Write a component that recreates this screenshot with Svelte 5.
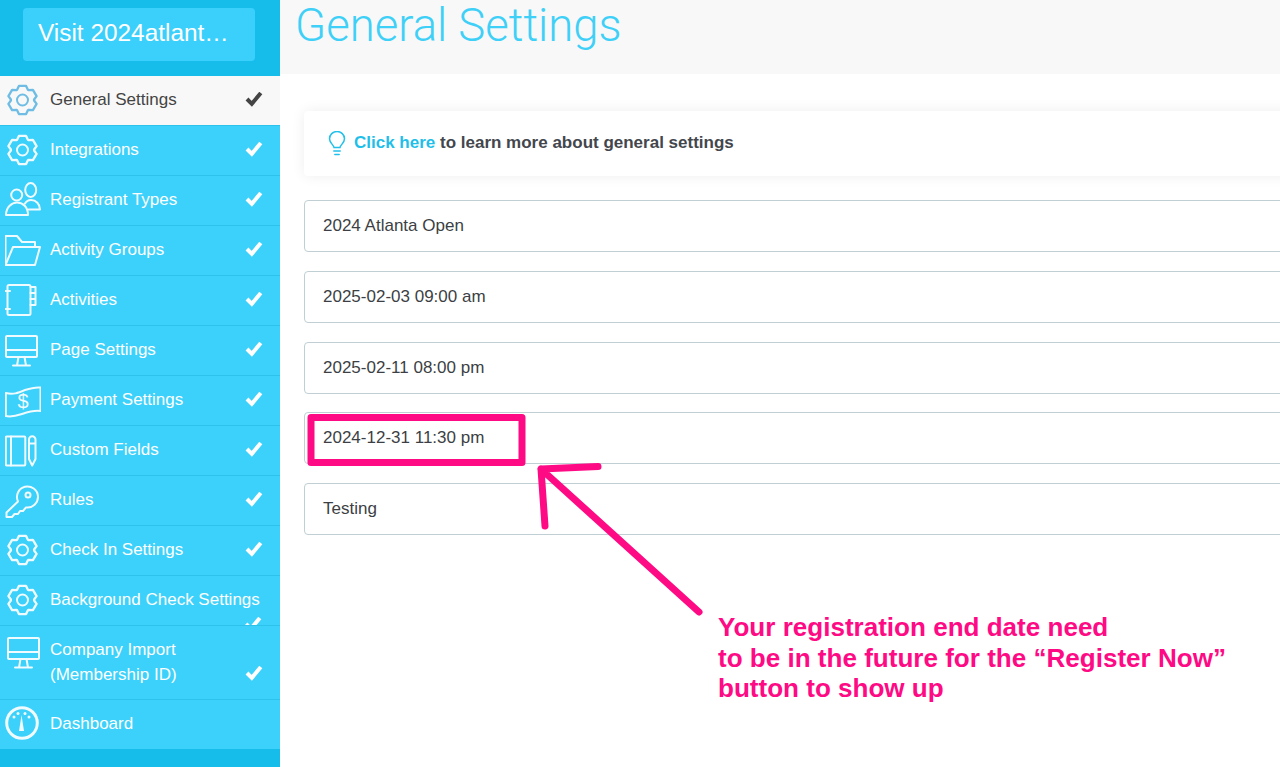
<script>
	// 6-tooth gear outline, centred on 17.5,18 in the 36px icon box
	function gearPath() {
		const pts = [];
		for (let i = 0; i < 6; i++) {
			const a = (i * Math.PI) / 3 - Math.PI / 2;
			for (const [off, r] of [
				[-0.48, 11.6],
				[-0.25, 14.6],
				[0.25, 14.6],
				[0.48, 11.6]
			]) {
				pts.push([17.5 + r * Math.cos(a + off), 18 + r * Math.sin(a + off)]);
			}
		}
		return 'M' + pts.map((p) => p[0].toFixed(1) + ' ' + p[1].toFixed(1)).join('L') + 'Z';
	}
	const gear = gearPath();

	const items = [
		{ label: 'General Settings', icon: 'gear', active: true },
		{ label: 'Integrations', icon: 'gear' },
		{ label: 'Registrant Types', icon: 'users' },
		{ label: 'Activity Groups', icon: 'folder' },
		{ label: 'Activities', icon: 'notebook' },
		{ label: 'Page Settings', icon: 'monitor' },
		{ label: 'Payment Settings', icon: 'money' },
		{ label: 'Custom Fields', icon: 'book' },
		{ label: 'Rules', icon: 'key' },
		{ label: 'Check In Settings', icon: 'gear' },
		{ label: 'Background Check Settings', icon: 'gear', pushed: true },
		{ label: 'Company Import', second: '(Membership ID)', icon: 'monitor', tall: true },
		{ label: 'Dashboard', icon: 'gauge', nocheck: true }
	];

	const fields = [
		'2024 Atlanta Open',
		'2025-02-03 09:00 am',
		'2025-02-11 08:00 pm',
		'2024-12-31 11:30 pm',
		'Testing'
	];
</script>

<div class="page">
	<aside class="sidebar">
		<div class="top">
			<div class="visit">Visit 2024atlant…</div>
		</div>
		<nav>
			{#each items as item}
				<div class="row" class:active={item.active} class:pushed={item.pushed} class:tall={item.tall} class:last={item.nocheck}>
					<svg class="icon" viewBox="0 0 36 36" width="36" height="36">
						{#if item.icon === 'gear'}
							<path class="cog" d={gear} />
							<circle cx="17.5" cy="18" r="5.5" />
						{:else if item.icon === 'users'}
							<circle cx="11.7" cy="13" r="5.5" />
							<ellipse cx="25.7" cy="8" rx="5.5" ry="7" />
							<path d="M1 33C1 25 7 20.500 12 20.500C18 20.500 23 25 23 33Z" />
							<path d="M20 21.500C21.500 19 24 18 26 18C31 18 35 22 35 27.500H23.500" />
						{:else if item.icon === 'folder'}
							<path d="M0.500 33V4H12L17 10H30V15" />
							<path d="M0.500 33L8 15H35L30 33Z" />
						{:else if item.icon === 'notebook'}
							<rect x="2.500" y="3" width="23" height="30" rx="1.500" />
							<path d="M0 9H5M0 27H5M25.500 5H30.500V23H25.500M25.500 11H30.500M25.500 17H30.500" />
						{:else if item.icon === 'monitor'}
							<rect x="1" y="4" width="31" height="21" rx="1" />
							<path d="M1 18H32M13.500 25L12 33.500M19.500 25L21 33.500M8 33.500H25" />
						{:else if item.icon === 'money'}
							<path d="M0.800 11C8 13 13 11 20 8C26 6 31 5 35.500 5.500V29C29 28 23 30 17 32C11 34 5 35 0.800 34Z" />
							<text x="18" y="26">$</text>
						{:else if item.icon === 'book'}
							<rect x="0.800" y="4.500" width="19.500" height="29" rx="1" />
							<path d="M6 4.500V33.500M24 7.500A3.250 3.250 0 0 1 30.500 7.500V27L27.200 33.500L24 27ZM24 11.500H30.500" />
						{:else if item.icon === 'key'}
							<path d="M13 19.500L1.500 30.500V35H7L9.500 32H13L15 29H18L21 25.400A10.500 10.500 0 1 0 13 19.500Z" />
							<circle cx="23" cy="13" r="2.500" />
						{:else if item.icon === 'gauge'}
							<circle class="thick" cx="17" cy="17" r="15.300" />
							<path class="solid" d="M16.500 9L19 25H14Z" />
							<circle class="solid" cx="9" cy="11" r="1.500" />
							<circle class="solid" cx="13" cy="7.500" r="1.500" />
							<circle class="solid" cx="20" cy="7.500" r="1.500" />
							<circle class="solid" cx="24" cy="11" r="1.500" />
						{/if}
					</svg>
					<span class="label">
						{item.label}
						{#if item.second}<br />{item.second}{/if}
					</span>
					{#if !item.nocheck}
						<svg class="check" viewBox="0 0 18 16" width="18" height="16">
							<path d="M2 7L6.800 11.800L15.800 1" />
						</svg>
					{/if}
				</div>
			{/each}
		</nav>
	</aside>

	<main>
		<header>
			<h1>General Settings</h1>
		</header>
		<div class="content">
			<div class="callout">
				<svg class="bulb" viewBox="0 0 18 25" width="18" height="25">
					<path d="M6 16.500C5.500 13.500 1.500 12 1.500 7.800A7.500 7.300 0 0 1 16.500 7.800C16.500 12 12.500 13.500 12 16.500Z" />
					<path d="M5.800 20H12.200M6.800 23.500H11.200" />
				</svg>
				<span><a href="#top">Click here</a> to learn more about general settings</span>
			</div>
			<div class="fields">
				{#each fields as value}
					<div class="field">{value}</div>
				{/each}
			</div>
		</div>
	</main>

	<svg class="marks" viewBox="0 0 1280 767" width="1280" height="767">
		<rect x="311" y="417.500" width="211" height="45" />
		<path d="M541 469L699 612M541 469L598 466.500M541 469L545 526" />
	</svg>
	<p class="note">
		Your registration end date need<br />
		to be in the future for the “Register Now”<br />
		button to show up
	</p>
</div>

<style>
	:global(body) {
		background: #fff;
	}

	.page {
		position: relative;
		display: flex;
		height: 767px;
		overflow: hidden;
		font-family: 'Liberation Sans', Arial, sans-serif;
	}

	.sidebar {
		flex: 0 0 280px;
		min-width: 0;
		background: #17bdea;
	}

	.top {
		height: 76px;
		padding: 8px 25px 0 23px;
		box-sizing: border-box;
	}

	.visit {
		height: 53px;
		line-height: 50px;
		padding: 0 15px;
		border-radius: 4px;
		background: #3bd0fb;
		color: #fff;
		font-size: 24.400px;
		white-space: nowrap;
	}

	.row {
		display: flex;
		align-items: center;
		box-sizing: border-box;
		height: 50px;
		padding: 0 17px 2px 5px;
		background: #3bd1fb;
		border-bottom: 1px solid #2cc2ec;
		color: #fff;
		font-size: 17px;
		line-height: 25px;
		overflow: hidden;
	}

	.row.active {
		background: #f8f8f8;
		color: #444;
	}

	.row.tall {
		height: 74px;
		align-items: flex-start;
		padding-top: 11px;
		padding-left: 7px;
	}

	.row.last {
		height: 49px;
		border-bottom: 0;
	}

	.label {
		flex: none;
		margin-left: 9px;
	}

	.tall .label {
		margin-left: 7px;
	}

	.icon {
		flex: none;
		fill: none;
		stroke: #fff;
		stroke-width: 2;
		stroke-linejoin: round;
		stroke-linecap: round;
		opacity: 0.92;
	}

	.icon .cog {
		stroke-width: 2.300;
	}

	.tall .icon {
		margin-top: -3px;
	}

	.active .icon {
		stroke: #64b9e3;
	}

	.icon text {
		fill: #fff;
		stroke: none;
		font-size: 20px;
		text-anchor: middle;
	}

	.icon .thick {
		stroke-width: 3;
	}

	.icon .solid {
		fill: #fff;
		stroke: none;
	}

	.check {
		flex: none;
		margin-left: auto;
		fill: none;
		stroke: #fff;
		stroke-width: 4;
	}

	.active .check {
		stroke: #444;
	}

	.tall .check {
		margin-top: 29px;
	}

	.pushed .check {
		margin-left: -16px;
		align-self: flex-end;
		margin-bottom: -10px;
	}

	main {
		flex: 1;
		min-width: 0;
		overflow: hidden;
	}

	header {
		height: 74px;
		padding-left: 15px;
		background: #f8f8f8;
	}

	h1 {
		margin: 0;
		color: #3fd0f8;
		font-family: Roboto, 'Liberation Sans', sans-serif;
		font-size: 45.500px;
		font-weight: 300;
		line-height: 52px;
	}

	.content {
		padding: 37px 0 0 24px;
	}

	.callout {
		display: flex;
		align-items: center;
		gap: 8px;
		box-sizing: border-box;
		height: 65px;
		margin-right: -20px;
		padding: 0 0 1px 24px;
		background: #fff;
		border-radius: 4px;
		box-shadow: 0 0 14px rgba(0, 0, 0, 0.07);
		color: #43474d;
		font-size: 17px;
		font-weight: bold;
	}

	.callout a {
		color: #1fbfe9;
		text-decoration: none;
	}

	.bulb {
		flex: none;
		fill: none;
		stroke: #22c0ea;
		stroke-width: 1.500;
		stroke-linecap: round;
	}

	.fields {
		display: flex;
		flex-direction: column;
		gap: 18.750px;
		margin-top: 24px;
		margin-right: -20px;
	}

	.field {
		box-sizing: border-box;
		height: 52px;
		line-height: 50px;
		padding-left: 18px;
		background: #fff;
		border: 1px solid #bfcfd3;
		border-radius: 4px;
		color: #3c3f44;
		font-size: 17px;
	}

	.marks {
		position: absolute;
		left: 0;
		top: 0;
		fill: none;
		stroke: #ff0a85;
		stroke-width: 7;
		stroke-linecap: round;
		stroke-linejoin: round;
		pointer-events: none;
	}

	.note {
		position: absolute;
		left: 718px;
		top: 612px;
		margin: 0;
		color: #ff0a85;
		font-size: 26.060px;
		font-weight: bold;
		line-height: 30.500px;
		white-space: nowrap;
	}
</style>
